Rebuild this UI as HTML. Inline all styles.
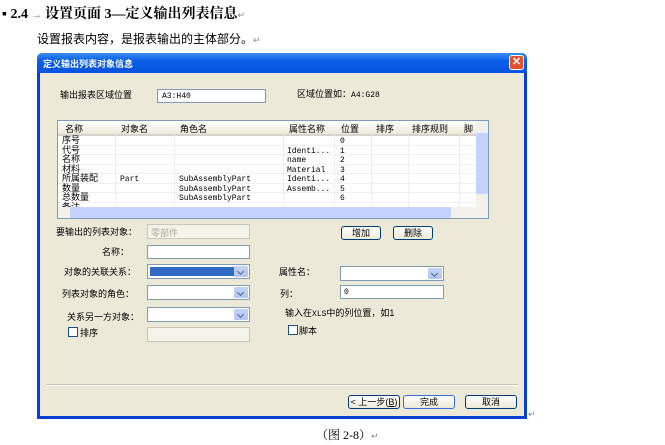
<!DOCTYPE html><html><head><meta charset="utf-8"><style>
body{margin:0;width:665px;height:445px;background:#fff;position:relative;font-family:"Liberation Sans","Noto Sans CJK SC",sans-serif;overflow:hidden}
.a{position:absolute;white-space:nowrap}
.s{font-size:10px;color:#000}
.m{font-family:"Liberation Mono","Noto Sans CJK SC",monospace;font-size:8px}
.inp{position:absolute;background:#fff;border:1px solid #7f9db9;box-sizing:border-box}
.cb{position:absolute;background:#fff;border:1px solid #7f9db9;box-sizing:border-box}
.cb i{position:absolute;right:1px;top:1px;bottom:1px;width:14px;background:linear-gradient(#c6d3f7,#b1c5f4);border-radius:1px}
.cb i:after{content:"";position:absolute;left:4px;top:3px;width:4px;height:4px;border-right:1.5px solid #4d6185;border-bottom:1.5px solid #4d6185;transform:rotate(45deg)}
.btn{position:absolute;border:1px solid #003c74;border-radius:3px;background:linear-gradient(#fff,#ece9d8);box-sizing:border-box;font-size:9px;text-align:center;line-height:12px}
.chk{position:absolute;width:10px;height:10px;border:1px solid #1c5180;background:#fff;box-sizing:border-box}
.r{position:absolute;left:0;width:420px;height:9.5px;font-size:9px;line-height:9px;border-bottom:1px solid #f0f0f0;box-sizing:border-box}
.r span{position:absolute;top:0}
.r .m{top:1px}
</style></head><body>
<div class="a" style="left:2px;top:3px;font-size:14px;font-weight:bold;font-family:'Liberation Serif','Noto Serif CJK SC',serif">▪ 2.4 <span style="font-weight:normal;font-size:10px;color:#666">→</span> 设置页面 3—定义输出列表信息<span style="font-weight:normal;color:#888;font-size:9px">↵</span></div>
<div class="a" style="left:37px;top:30px;font-size:12px">设置报表内容，是报表输出的主体部分。<span style="color:#888;font-size:9px">↵</span></div>
<div class="a" style="left:37px;top:53px;width:490px;height:366px;background:#0a3fd6;border-radius:6px 6px 0 0;box-sizing:border-box;padding:0 3px 3px 3px">
<div style="height:20px;background:linear-gradient(#3a8cf5,#0a5ee8 40%,#0653e0);border-radius:5px 5px 0 0;margin:0 -3px;position:relative">
<span class="a" style="left:6px;top:4px;color:#fff;font-size:9px;font-weight:bold">定义输出列表对象信息</span>
<span class="a" style="right:3px;top:2px;width:15px;height:15px;background:#e0512c;border:1px solid #fff;border-radius:3px;box-sizing:border-box;color:#fff;font-size:11px;text-align:center;line-height:13px;font-weight:bold">✕</span></div>
<div style="background:#ece9d8;height:343px"></div></div>
<div class="a s" style="left:60px;top:88px;font-size:9px">输出报表区域位置</div>
<div class="inp" style="left:157px;top:89px;width:109px;height:14px"><span class="a m" style="left:4px;top:2px">A3:H40</span></div>
<div class="a" style="left:297px;top:87px;font-size:9px">区域位置如：<span class="m">A4:G28</span></div>
<div class="a" style="left:57px;top:120px;width:432px;height:99px;border:1px solid #7f9db9;background:#fff;box-sizing:border-box;overflow:hidden">
<div style="position:absolute;left:0;top:0;right:12px;height:13px;background:linear-gradient(#fff,#ebeadb);border-bottom:2px solid #d6d3ce;font-size:9px"></div>
<div class="a" style="font-size:9px;top:1px;left:7px">名称</div><div class="a" style="font-size:9px;top:1px;left:63px">对象名</div><div class="a" style="font-size:9px;top:1px;left:122px">角色名</div><div class="a" style="font-size:9px;top:1px;left:231px">属性名称</div><div class="a" style="font-size:9px;top:1px;left:283px">位置</div><div class="a" style="font-size:9px;top:1px;left:318px">排序</div><div class="a" style="font-size:9px;top:1px;left:354px">排序规则</div><div class="a" style="font-size:9px;top:1px;left:406px">脚</div>
<div class="r" style="top:15px"><span style="left:4px">序号</span><span class="m" style="left:282px">0</span></div>
<div class="r" style="top:24.5px"><span style="left:4px">代号</span><span class="m" style="left:229px">Identi...</span><span class="m" style="left:282px">1</span></div>
<div class="r" style="top:34px"><span style="left:4px">名称</span><span class="m" style="left:229px">name</span><span class="m" style="left:282px">2</span></div>
<div class="r" style="top:43.5px"><span style="left:4px">材料</span><span class="m" style="left:229px">Material</span><span class="m" style="left:282px">3</span></div>
<div class="r" style="top:53px"><span style="left:4px">所属装配</span><span class="m" style="left:62px">Part</span><span class="m" style="left:121px">SubAssemblyPart</span><span class="m" style="left:229px">Identi...</span><span class="m" style="left:282px">4</span></div>
<div class="r" style="top:62.5px"><span style="left:4px">数量</span><span class="m" style="left:121px">SubAssemblyPart</span><span class="m" style="left:229px">Assemb...</span><span class="m" style="left:282px">5</span></div>
<div class="r" style="top:72px"><span style="left:4px">总数量</span><span class="m" style="left:121px">SubAssemblyPart</span><span class="m" style="left:282px">6</span></div>
<div class="r" style="top:81.5px"><span style="left:4px">备注</span></div>
<div style="position:absolute;left:57px;top:14px;width:1px;height:73px;background:#eee"></div><div style="position:absolute;left:116px;top:14px;width:1px;height:73px;background:#eee"></div><div style="position:absolute;left:225px;top:14px;width:1px;height:73px;background:#eee"></div><div style="position:absolute;left:276px;top:14px;width:1px;height:73px;background:#eee"></div><div style="position:absolute;left:313px;top:14px;width:1px;height:73px;background:#eee"></div><div style="position:absolute;left:350px;top:14px;width:1px;height:73px;background:#eee"></div><div style="position:absolute;left:401px;top:14px;width:1px;height:73px;background:#eee"></div>
<div style="position:absolute;right:0;top:0;width:12px;height:87px;background:#f3f1ec"><div style="position:absolute;left:0;top:12px;width:12px;height:61px;background:#c3d3fd;border-radius:2px"></div></div>
<div style="position:absolute;left:0;bottom:0;width:430px;height:11px;background:#f3f1ec"><div style="position:absolute;left:12px;top:0;width:381px;height:11px;background:#c3d3fd;border-radius:2px"></div></div>
</div>
<div class="a s" style="left:56px;top:225px;font-size:9px">要输出的列表对象：</div>
<div class="cb" style="left:147px;top:224px;width:103px;height:15px;background:#f5f4ea;border-color:#c9c7ba"><span class="a" style="left:3px;top:1px;font-size:9px;color:#aca899">零部件</span></div>
<div class="btn" style="left:341px;top:226px;width:40px;height:14px">增加</div>
<div class="btn" style="left:393px;top:226px;width:40px;height:14px">删除</div>
<div class="a s" style="left:102px;top:245px;font-size:9px">名称：</div>
<div class="inp" style="left:147px;top:245px;width:103px;height:14px"></div>
<div class="a s" style="left:64px;top:265px;font-size:9px">对象的关联关系：</div>
<div class="cb" style="left:147px;top:264px;width:103px;height:15px"><div style="position:absolute;left:2px;top:2px;width:84px;height:9px;background:#316ac5"></div><i></i></div>
<div class="a s" style="left:279px;top:265px;font-size:9px">属性名：</div>
<div class="cb" style="left:340px;top:266px;width:104px;height:15px"><i></i></div>
<div class="a s" style="left:62px;top:287px;font-size:9px">列表对象的角色：</div>
<div class="cb" style="left:147px;top:285px;width:103px;height:15px"><i></i></div>
<div class="a s" style="left:280px;top:287px;font-size:9px">列：</div>
<div class="inp" style="left:340px;top:285px;width:104px;height:14px"><span class="a m" style="left:3px;top:2px">0</span></div>
<div class="a s" style="left:67px;top:310px;font-size:9px">关系另一方对象：</div>
<div class="cb" style="left:147px;top:307px;width:103px;height:15px"><i></i></div>
<div class="a" style="left:285px;top:306px;font-size:9px">输入在<span class="m">XLS</span>中的列位置，如1</div>
<div class="chk" style="left:68px;top:327px"></div><div class="a s" style="left:80px;top:326px;font-size:9px">排序</div>
<div class="cb" style="left:147px;top:327px;width:103px;height:15px;background:#f5f4ea;border-color:#c9c7ba"></div>
<div class="chk" style="left:288px;top:325px"></div><div class="a s" style="left:299px;top:324px;font-size:9px">脚本</div>
<div class="a" style="left:46px;top:384px;width:472px;height:1px;background:#c8c5b5;border-bottom:1px solid #fff"></div>
<div class="btn" style="left:348px;top:395px;width:52px;height:14px">&lt; 上一步(<u>B</u>)</div>
<div class="btn" style="left:403px;top:395px;width:52px;height:14px;border-color:#3c6ed8">完成</div>
<div class="btn" style="left:465px;top:395px;width:52px;height:14px">取消</div>
<div class="a" style="left:528px;top:409px;font-size:9px;color:#888">↵</div>
<div class="a" style="left:316px;top:426px;font-size:12px;font-family:'Liberation Serif','Noto Serif CJK SC',serif">（图 2-8）<span style="color:#888;font-size:9px">↵</span></div>
</body></html>
